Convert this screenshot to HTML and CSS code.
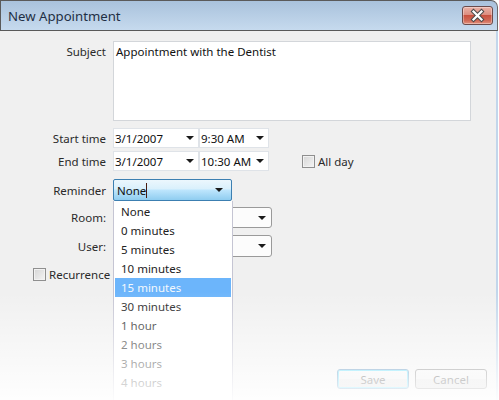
FILE: index.html
```html
<!DOCTYPE html>
<html>
<head>
<meta charset="utf-8">
<link rel="stylesheet" href="styles.css">
</head>
<body>
<div class="window">
  <div class="titlebar">
    <span class="title">New Appointment</span>
    <div class="close">
      <svg width="29" height="17" viewBox="0 0 29 17">
        <path d="M10.5 4.5 L18.5 12.5 M18.5 4.5 L10.5 12.5" stroke="#4a4a4a" stroke-width="4.2" stroke-linecap="square" fill="none"/>
        <path d="M10.5 4.5 L18.5 12.5 M18.5 4.5 L10.5 12.5" stroke="#ffffff" stroke-width="2.2" stroke-linecap="square" fill="none"/>
      </svg>
    </div>
  </div>
  <div class="body">
    <div class="row row-subject">
      <div class="label label-top">Subject</div>
      <div class="textarea">Appointment with the Dentist</div>
    </div>
    <div class="row row-start">
      <div class="label">Start time</div>
      <div class="field date"><span>3/1/2007</span><i class="arrow"></i></div>
      <div class="field time"><span>9:30 AM</span><i class="arrow"></i></div>
    </div>
    <div class="row row-end">
      <div class="label">End time</div>
      <div class="field date"><span>3/1/2007</span><i class="arrow"></i></div>
      <div class="field time"><span>10:30 AM</span><i class="arrow"></i></div>
      <label class="check check-allday"><span class="box"></span>All day</label>
    </div>
    <div class="row row-reminder">
      <div class="label">Reminder</div>
      <div class="combo-hot"><span>None</span><span class="caret"></span><i class="arrow"></i></div>
    </div>
    <div class="row row-room">
      <div class="label">Room:</div>
      <div class="combo"><i class="arrow"></i></div>
    </div>
    <div class="row row-user">
      <div class="label">User:</div>
      <div class="combo"><i class="arrow"></i></div>
    </div>
    <div class="row row-rec">
      <label class="check"><span class="box"></span>Recurrence</label>
    </div>
    <div class="buttons">
      <div class="btn btn-default">Save</div>
      <div class="btn">Cancel</div>
    </div>
    <ul class="dropdown">
      <li>None</li>
      <li>0 minutes</li>
      <li>5 minutes</li>
      <li>10 minutes</li>
      <li class="sel">15 minutes</li>
      <li>30 minutes</li>
      <li>1 hour</li>
      <li>2 hours</li>
      <li>3 hours</li>
      <li>4 hours</li>
    </ul>
  </div>
  <div class="fade"></div>
</div>
</body>
</html>
```

FILE: styles.css
```css
html, body {
  margin: 0;
  padding: 0;
  background: #ffffff;
}
body {
  font-family: "Noto Sans", "DejaVu Sans", sans-serif;
  font-size: 11.5px;
  color: #1e1e1e;
}
.window {
  position: relative;
  width: 498px;
  height: 400px;
  overflow: hidden;
  display: flex;
  flex-direction: column;
}
.titlebar {
  height: 29px;
  flex: none;
  border: 1px solid #5a5a5a;
  border-right-color: #6a6a6a;
  border-top-right-radius: 7px;
  background: linear-gradient(#a9c2dc, #c6daee);
  display: flex;
  align-items: center;
  justify-content: space-between;
  padding: 0 4px 0 7px;
  box-sizing: content-box;
}
.title {
  font-size: 13.2px;
  color: #1f2f44;
  margin-top: 1px;
}
.close {
  width: 29px;
  height: 17px;
  border: 1px solid #6b4b4b;
  border-radius: 3px;
  background: linear-gradient(#eab1a6 0%, #dc8e80 45%, #c9513f 50%, #d06a57 80%, #e3937f 100%);
  box-shadow: inset 0 0 0 1px rgba(255,255,255,0.35);
  display: flex;
}
.close svg { display: block; }
.body {
  position: relative;
  flex: 1;
  background: #f0f0f0;
  border-right: 2px solid #c2d6eb;
  display: flex;
  flex-direction: column;
}
.row {
  display: flex;
  align-items: center;
  gap: 7px;
  height: 20px;
}
.label {
  width: 106px;
  flex: none;
  text-align: right;
  color: #2a2a2a;
}
.label-top { align-self: flex-start; padding-top: 3px; }
.row-subject { margin-top: 10px; height: 82px; align-items: flex-start; }
.row-start { margin-top: 5px; gap: 0; }
.row-start .label, .row-end .label { margin-right: 7px; }
.row-end { margin-top: 3px; gap: 0; }
.row-reminder { margin-top: 8px; height: 22px; }
.row-room { margin-top: 6px; height: 21px; }
.row-user { margin-top: 7px; height: 22px; }
.row-rec { margin-top: 10px; height: 14px; padding-left: 33px; }
.textarea {
  width: 358px;
  height: 80px;
  background: #ffffff;
  border: 1px solid #d3d6da;
  padding: 2px 2px;
  box-sizing: border-box;
  color: #111;
  line-height: 16px;
}
.field {
  height: 20px;
  box-sizing: border-box;
  background: #fff;
  border: 1px solid #dfe3e8;
  display: flex;
  align-items: center;
  justify-content: space-between;
  padding: 0 4px 0 1px;
  color: #111;
}
.date { width: 86px; }
.time { width: 70px; }
.arrow {
  width: 0;
  height: 0;
  border-left: 4px solid transparent;
  border-right: 4px solid transparent;
  border-top: 4px solid #1a1a1a;
  display: block;
  flex: none;
}
.check {
  display: flex;
  align-items: center;
  gap: 3px;
  color: #2a2a2a;
}
.check-allday { margin-left: 33px; }
.box {
  width: 11px;
  height: 11px;
  border: 1px solid #8f8f8f;
  background: linear-gradient(135deg, #d6d6d6, #f4f4f4);
  box-shadow: inset 0 0 0 1px #f2f2f2;
  flex: none;
}
.combo-hot {
  width: 119px;
  height: 22px;
  box-sizing: border-box;
  border: 1px solid #3c7fb1;
  border-radius: 2px;
  background: linear-gradient(#ecf7fd 0%, #d9f0fc 45%, #bee6fd 50%, #8fcdf0 100%);
  display: flex;
  align-items: center;
  padding: 0 8px 0 3px;
  color: #111;
}
.caret {
  width: 1px;
  height: 15px;
  background: #4a1c10;
}
.combo-hot .arrow { margin-left: auto; }
.combo {
  width: 159px;
  height: 100%;
  box-sizing: border-box;
  border: 1px solid #9a9a9a;
  border-radius: 3px;
  background: #fcfcfc;
  display: flex;
  align-items: center;
  justify-content: flex-end;
  padding-right: 5px;
}
.buttons {
  margin-top: auto;
  margin-bottom: 11px;
  display: flex;
  justify-content: flex-end;
  gap: 6px;
  padding-right: 9px;
}
.btn {
  width: 72px;
  height: 20px;
  box-sizing: border-box;
  border: 1px solid #707070;
  border-radius: 3px;
  background: linear-gradient(#f2f2f2 0%, #ebebeb 50%, #dddddd 51%, #cfcfcf 100%);
  display: flex;
  align-items: center;
  justify-content: center;
  color: #222;
}
.btn-default {
  border-color: #3c7fb1;
  box-shadow: inset 0 0 0 1px #48d8fb;
}
.dropdown {
  position: absolute;
  left: 113px;
  top: 170px;
  width: 120px;
  height: 210px;
  margin: 0;
  padding: 1px;
  box-sizing: border-box;
  list-style: none;
  background: #fff;
  border: 1px solid #c5c5d3;
  border-top: none;
}
.dropdown li {
  height: 19px;
  line-height: 19px;
  padding-left: 6px;
  color: #222;
}
.dropdown li.sel {
  background: #6cb5fb;
  color: #f4f8fc;
}
.fade {
  position: absolute;
  left: 0;
  right: 0;
  top: 292px;
  bottom: 0;
  background: linear-gradient(rgba(255,255,255,0) 0%, rgba(255,255,255,0.94) 100%);
  pointer-events: none;
}
```
